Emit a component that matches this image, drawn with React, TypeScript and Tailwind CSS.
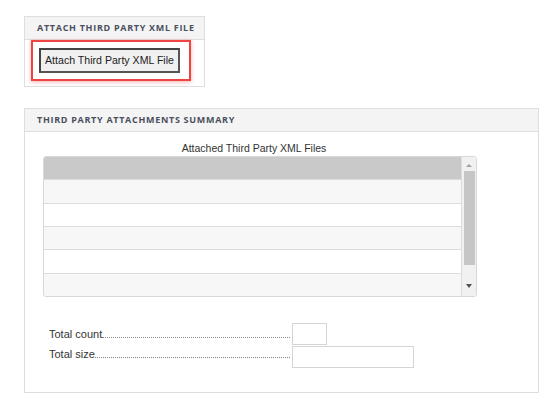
import React from "react";

function Header({ children }: { children: React.ReactNode }) {
  return (
    <div className="h-[23px] bg-[#f4f4f5] border-b border-[#dedede] flex items-center pl-[12px] text-[9px] font-bold tracking-[0.7px] text-[#4b4f5c] uppercase whitespace-nowrap" style={{ fontFamily: '"Open Sans", "Noto Sans", sans-serif' }}>
      {children}
    </div>
  );
}

export default function App() {
  const rows = [
    { h: "h-[23px]", bg: "bg-[#c9c9c9]" },
    { h: "h-[24px]", bg: "bg-[#f7f7f7]" },
    { h: "h-[23px]", bg: "bg-white" },
    { h: "h-[23px]", bg: "bg-[#f7f7f7]" },
    { h: "h-[24px]", bg: "bg-white" },
    { h: "h-[22px]", bg: "bg-[#f7f7f7]" },
  ];
  return (
    <div className="w-[559px] h-[398px] bg-white pl-[24px] pt-[16px] text-[#333]" style={{ fontFamily: '"Liberation Sans", Arial, sans-serif' }}>
      <div className="w-[181px] border border-[#dedede]">
        <Header>Attach Third Party XML File</Header>
        <div className="pl-[6px] pb-[5px]">
          <div className="w-[160px] h-[41px] border-2 border-[#ef4444] shadow-[0_1px_4px_rgba(239,68,68,0.45)] pl-[6px] pt-[6px]">
            <button className="w-[141px] h-[25px] px-0 bg-[#f0f0f0] border-2 border-[#555] border-t-[#444] border-l-[#444] text-[10.6px] text-[#222] flex items-center justify-center whitespace-nowrap" style={{ fontFamily: '"Liberation Sans", Arial, sans-serif' }}>
              Attach Third Party XML File
            </button>
          </div>
        </div>
      </div>

      <div className="mt-[21px] w-[515px] h-[285px] border border-[#dedede]">
        <Header>Third Party Attachments Summary</Header>
        <div className="pl-[18px]">
          <div className="w-[434px] text-center text-[10.5px] leading-[14px] mt-[9px] mb-[1px] pr-[12px]">Attached Third Party XML Files</div>
          <div className="w-[434px] h-[141px] border border-[#d8d8d8] rounded-[3px] overflow-hidden flex">
            <div className="flex-1 flex flex-col">
              {rows.map((r, i) => (
                <div key={i} className={`${r.h} ${r.bg} ${i < rows.length - 1 ? "border-b border-[#dcdcdc]" : ""}`} />
              ))}
            </div>
            <div className="w-[15px] bg-[#f1f1f1] border-l border-[#dcdcdc] flex flex-col items-center">
              <div className="h-[14px] flex items-center justify-center">
                <div className="w-0 h-0 border-l-[3px] border-r-[3px] border-b-[3px] border-l-transparent border-r-transparent border-b-[#a0a0a0] mt-[2px]" />
              </div>
              <div className="w-[11px] h-[94px] bg-[#c6c6c6]" />
              <div className="flex-1 flex items-end justify-center pb-[8px]">
                <div className="w-0 h-0 border-l-[3px] border-r-[3px] border-t-[4px] border-l-transparent border-r-transparent border-t-[#505050]" />
              </div>
            </div>
          </div>

          <div className="mt-[26px] pl-[6px] flex flex-col gap-[1px] text-[11px]">
            <div className="flex items-center">
              <div className="w-[241px] flex items-end leading-[14px] whitespace-nowrap">
                <span>Total count</span>
                <span className="flex-1 mb-[3px] border-b border-dotted border-[#888]" />
              </div>
              <div className="ml-[2px] w-[35px] h-[22px] border border-[#d5d5d5]" />
            </div>
            <div className="flex items-start">
              <div className="w-[241px] flex items-end leading-[14px] whitespace-nowrap mt-[1px]">
                <span>Total size</span>
                <span className="flex-1 mb-[3px] border-b border-dotted border-[#888]" />
              </div>
              <div className="ml-[2px] w-[122px] h-[22px] border border-[#d5d5d5]" />
            </div>
          </div>
        </div>
      </div>
    </div>
  );
}
